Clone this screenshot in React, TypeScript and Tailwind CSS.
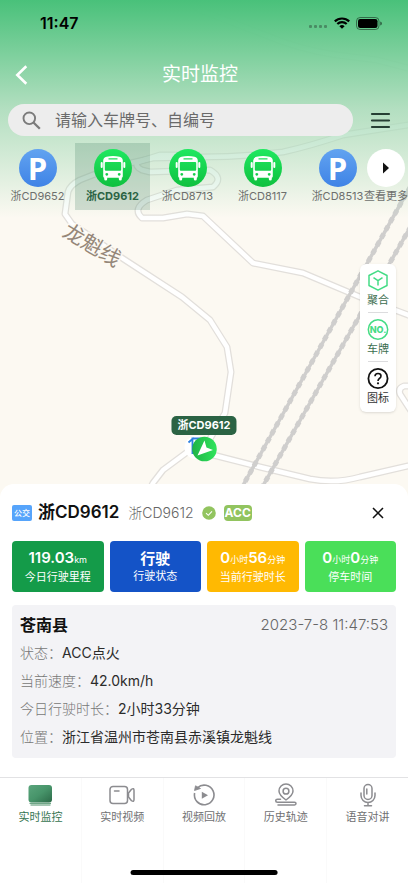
import { useState, type ReactNode } from 'react'

const sans = "font-['Inter','Noto_Sans_CJK_SC',sans-serif]"

const vehicles = [
  { plate: '浙CD9652', parked: true },
  { plate: '浙CD9612', parked: false },
  { plate: '浙CD8713', parked: false },
  { plate: '浙CD8117', parked: false },
  { plate: '浙CD8513', parked: true },
]

const details = [
  { label: '状态：', value: 'ACC点火' },
  { label: '当前速度：', value: '42.0km/h' },
  { label: '今日行驶时长：', value: '2小时33分钟' },
  { label: '位置：', value: '浙江省温州市苍南县赤溪镇龙魁线' },
]

const roads = [
  'M190 0 L200 10 L260 33 Q300 50 337 55 L377 60 L408 68 L440 76',
  'M440 117 L408 125 L343 135 Q310 146 283 152 Q240 157 200 157 L153 158 L113 167 L80 180 Q70 185 68 192 L65 214 L72 224 L122 258 L182 297 L210 320 L227 347 L231 372 L225 413 L204 449',
  'M200 155 L160 155 L138 162 Q134 166 142 170 L150 172 L180 171 L210 170 Q224 178 213 187 L177 190 L147 200 Q132 209 142 218 L163 218 L187 214 L203 216 L253 263 L303 273 L360 297 L408 315 L440 326',
  'M140 510 L153 483 L163 470 L190 450 L217 456 L260 467 L310 479 Q335 484 360 477 L408 466 L440 460',
  'M440 386 L404 386 Q398 388 400 394 L411 411 L430 430',
]

const rails = ['M415 179 L401 203 L346 301 L236 498', 'M420 211 L407 233 L340 350 L256 498']

function MapCanvas() {
  return (
    <svg className="absolute inset-0 h-full w-full" viewBox="0 0 408 496" preserveAspectRatio="xMidYMin slice" aria-hidden="true">
      <g fill="none" strokeLinejoin="round">
        <g stroke="#e2dfdb" strokeWidth="7">
          {roads.map(d => <path key={d} d={d} />)}
        </g>
        <g stroke="#ffffff" strokeWidth="4.500">
          {roads.map(d => <path key={d} d={d} />)}
        </g>
        {rails.map(d => (
          <g key={d} stroke="#cfcecd">
            <path d={d} strokeWidth="3.500" />
            <path d={d} strokeWidth="5" strokeDasharray="5 4" />
          </g>
        ))}
      </g>
      <text
        transform="translate(92 245) rotate(31)"
        textAnchor="middle"
        dominantBaseline="central"
        fontSize="21"
        fill="#958779"
        stroke="#fcf9f2"
        strokeWidth="3"
        paintOrder="stroke"
      >
        龙魁线
      </text>
    </svg>
  )
}

function StatusBar() {
  return (
    <div className="flex h-[46px] items-center justify-between pl-10 pr-[26px]">
      <span className="text-base font-semibold text-black">11:47</span>
      <div className="flex items-center gap-[6px]">
        <svg width="20" height="14" viewBox="0 0 20 14" fill="#1a1a1a" fillOpacity="0.35">
          <rect x="1" y="9" width="3" height="3" rx="1" />
          <rect x="6" y="9" width="3" height="3" rx="1" />
          <rect x="11" y="9" width="3" height="3" rx="1" />
          <rect x="16" y="9" width="3" height="3" rx="1" />
        </svg>
        <svg width="16" height="12" viewBox="0 0 16 12" fill="none" stroke="#000" strokeWidth="2.2">
          <path d="M0.8 4.4 A10.4 10.4 0 0 1 15.2 4.4" />
          <path d="M3.3 7 A6.8 6.8 0 0 1 12.7 7" />
          <path d="M8 11.8 L5.4 9.2 A3.7 3.7 0 0 1 10.6 9.2 Z" fill="#000" stroke="none" />
        </svg>
        <svg width="26" height="13" viewBox="0 0 26 13">
          <rect x="0.5" y="0.5" width="22.5" height="12" rx="3.6" fill="none" stroke="#000" strokeOpacity="0.45" />
          <rect x="2" y="2" width="19.5" height="9" rx="2.2" />
          <path d="M24.2 4.4 Q26 5 26 6.5 Q26 8 24.2 8.6 Z" fillOpacity="0.5" />
        </svg>
      </div>
    </div>
  )
}

function BusIcon() {
  return (
    <svg width="38" height="38" viewBox="0 0 38 38" aria-hidden="true">
      <defs>
        <linearGradient id="bus" x1="0" y1="0" x2="0" y2="1">
          <stop offset="0" stopColor="#1fe860" />
          <stop offset="1" stopColor="#0fc03f" />
        </linearGradient>
      </defs>
      <circle cx="19" cy="19" r="19" fill="url(#bus)" />
      <g fill="#fff">
        <rect x="6.700" y="13" width="2" height="6" rx="1" />
        <rect x="29.300" y="13" width="2" height="6" rx="1" />
        <path
          fillRule="evenodd"
          d="M12.500 7.800 Q19 6.200 25.500 7.800 Q28.500 8.500 28.800 11.500 V27.300 Q28.800 28.500 27.800 28.700 V30 Q27.800 31.600 26.300 31.600 Q24.800 31.600 24.800 30 V28.800 H13.200 V30 Q13.200 31.600 11.700 31.600 Q10.200 31.600 10.200 30 V28.700 Q9.200 28.500 9.200 27.300 V11.500 Q9.500 8.500 12.500 7.800 Z M14.500 9.200 V10.600 H23.500 V9.200 Z M11.800 13 Q10.800 13 10.800 14 V20.800 Q10.800 21.800 11.800 21.800 H26.200 Q27.200 21.800 27.200 20.800 V14 Q27.200 13 26.200 13 Z M12.800 23.900 a1.400 1.400 0 1 0 0.010 0 Z M25.200 23.900 a1.400 1.400 0 1 0 0.010 0 Z"
        />
      </g>
    </svg>
  )
}

function ParkingIcon() {
  return (
    <span className="flex size-[38px] items-center justify-center rounded-full bg-linear-to-b from-[#62a3f0] to-[#3f83e6] font-['Open_Sans',sans-serif] text-[31px] leading-[38px] font-bold text-white">
      P
    </span>
  )
}

function ToolButton({ icon, label, className }: { icon: ReactNode; label: string; className: string }) {
  return (
    <button type="button" className={`flex w-full flex-col items-center gap-px pt-[6px] pb-1 text-[11px] leading-4 ${className}`}>
      {icon}
      {label}
    </button>
  )
}

function MapTools() {
  return (
    <div className="absolute top-[264px] right-3 flex w-9 flex-col items-center rounded-md bg-white pb-[2px] shadow-sm">
      <ToolButton
        label="聚合"
        className="text-[#3c6e50]"
        icon={
          <svg width="22" height="21" viewBox="0 0 22 21" fill="none" stroke="#45dc86" strokeWidth="1.5" strokeLinejoin="round">
            <path d="M11 0.800 L20 5.500 V15.500 L11 20.200 L2 15.500 V5.500 Z" />
            <path d="M6.500 7.700 L11 10.700 L15.500 7.700 M11 10.700 V15.500" />
          </svg>
        }
      />
      <hr className="w-5 border-[#dcdcde]" />
      <ToolButton
        label="车牌"
        className="text-[#3c6e50]"
        icon={
          <svg width="22" height="21" viewBox="0 0 22 21">
            <circle cx="11" cy="10.500" r="9.700" fill="none" stroke="#45dc86" strokeWidth="1.500" />
            <text x="11" y="14" textAnchor="middle" fontSize="9" fontWeight="800" fill="#45dc86">NO.</text>
          </svg>
        }
      />
      <hr className="w-5 border-[#dcdcde]" />
      <ToolButton
        label="图标"
        className="text-[#333]"
        icon={
          <svg width="22" height="21" viewBox="0 0 22 21" fill="none" stroke="#111" strokeWidth="1.800">
            <circle cx="11" cy="10.500" r="9.600" />
            <path d="M8 8.300 Q8 5.500 11 5.500 Q14 5.500 14 8 Q14 9.400 12.400 10.500 Q11 11.500 11 13" strokeWidth="1.600" />
            <circle cx="11" cy="15.300" r="1.100" fill="#111" stroke="none" />
          </svg>
        }
      />
    </div>
  )
}

function VehicleMarker() {
  return (
    <div className="absolute top-[416px] left-1/2 flex -translate-x-1/2 flex-col items-center">
      <span className="rounded-[5px] bg-[#2b6344] px-[6px] text-[11px] leading-[19px] font-bold whitespace-nowrap text-white">
        浙CD9612
      </span>
      <svg width="42" height="28" viewBox="0 0 42 28" aria-hidden="true">
        <defs>
          <linearGradient id="marker" x1="0" y1="0" x2="1" y2="0">
            <stop offset="0" stopColor="#1fb347" />
            <stop offset="1" stopColor="#2fe45c" />
          </linearGradient>
        </defs>
        <circle cx="12.500" cy="12.500" r="11.500" fill="#fff" />
        <path d="M5 7.500 L9 4 V19 M8 3.500 H18" fill="none" stroke="#2c7fe0" strokeWidth="1.800" />
        <circle cx="21" cy="14" r="12.300" fill="url(#marker)" />
        <path d="M21 5.500 L23 12.500 L29.500 15 L14 20.500 Z" fill="#fff" />
      </svg>
    </div>
  )
}

function StatCard({ value, label, className }: { value: ReactNode; label: string; className: string }) {
  return (
    <div className={`flex h-[51px] flex-col items-center justify-center rounded-[4px] whitespace-nowrap text-white ${className}`}>
      <span className="text-[15px] leading-[18px] font-semibold">{value}</span>
      <span className="text-[11px] leading-4">{label}</span>
    </div>
  )
}

function Unit({ children }: { children: ReactNode }) {
  return <small className="text-[9px] font-normal">{children}</small>
}

const tabIcons = {
  monitor: (
    <svg width="26" height="24" viewBox="0 0 26 24">
      <defs>
        <linearGradient id="screen" x1="0" y1="0" x2="1" y2="1">
          <stop offset="0" stopColor="#5aa57c" />
          <stop offset="0.500" stopColor="#47946a" />
          <stop offset="1" stopColor="#2c6a48" />
        </linearGradient>
      </defs>
      <rect x="1.500" y="2" width="23.500" height="17.500" rx="3" fill="url(#screen)" />
      <path d="M2.500 20.300 H24 M3.500 22 H23.500" stroke="#4c9069" strokeWidth="1" />
    </svg>
  ),
  video: (
    <svg width="26" height="24" viewBox="0 0 26 24" fill="none" stroke="#8c8c90" strokeWidth="1.500" strokeLinejoin="round">
      <rect x="1" y="3.500" width="17.500" height="17" rx="3" />
      <path d="M5.500 8 H10" strokeLinecap="round" />
      <path d="M19.500 10 L22.500 6.300 Q25 4.500 25 7.500 V16.500 Q25 19.500 22.500 17.700 L19.500 14 Z" />
    </svg>
  ),
  replay: (
    <svg width="26" height="24" viewBox="0 0 26 24" fill="none" stroke="#8c8c90" strokeWidth="1.600">
      <path d="M6.500 4.800 A9.800 9.800 0 1 1 3.600 10" />
      <path d="M3.500 7.500 L4.500 2.800 L9.500 5.500 Z" fill="#8c8c90" strokeWidth="0.800" />
      <path d="M10.800 8.800 L17 12.300 L10.800 15.800 Z" fill="#8c8c90" stroke="none" />
    </svg>
  ),
  track: (
    <svg width="26" height="24" viewBox="0 0 26 24" fill="none" stroke="#8c8c90" strokeWidth="1.500" strokeLinecap="round" strokeLinejoin="round">
      <path d="M13 17 Q6 12 6 8 A7 7 0 0 1 20 8 Q20 12 13 17 Z" />
      <circle cx="13" cy="8.200" r="2.900" />
      <path d="M7.500 16.300 H4.500 Q2.700 16.300 2.700 17.800 Q2.700 19.300 4.500 19.300 H21.500 Q23 19.300 23 20.600 Q23 22 21.500 22 H5" />
    </svg>
  ),
  voice: (
    <svg width="26" height="24" viewBox="0 0 26 24" fill="none" stroke="#8c8c90" strokeWidth="1.500" strokeLinecap="round">
      <rect x="9" y="1.500" width="8" height="15" rx="4" />
      <path d="M6 10 V12.500 A7 7 0 0 0 20 12.500 V10 M13 19.500 V22.500 M9.500 22.700 H16.500 M11.800 6 V11" />
    </svg>
  ),
}

const tabs = [
  { label: '实时监控', icon: tabIcons.monitor },
  { label: '实时视频', icon: tabIcons.video },
  { label: '视频回放', icon: tabIcons.replay },
  { label: '历史轨迹', icon: tabIcons.track },
  { label: '语音对讲', icon: tabIcons.voice },
]

export default function App() {
  const [selected, setSelected] = useState('浙CD9612')
  const [tab, setTab] = useState('实时监控')
  const [query, setQuery] = useState('')

  return (
    <main className={`flex min-h-screen flex-col bg-white ${sans}`}>
      <section className="relative min-h-[480px] flex-1 overflow-hidden bg-[#fcf9f2]">
        <MapCanvas />

        <div className="relative bg-linear-to-b/srgb from-[#49c17a] via-[#abdcbb]/90 to-[#fcf9f2]/0 pb-2">
          <StatusBar />

          <header className="flex h-[58px] items-center">
            <button type="button" aria-label="返回" className="flex h-10 w-12 items-center pl-[15px]">
              <svg width="13" height="20" viewBox="0 0 13 20" fill="none" stroke="#fff" strokeWidth="2.600">
                <path d="M11.300 1.300 L2.300 10 L11.300 18.700" />
              </svg>
            </button>
            <h1 className="flex-1 text-center text-[19px] leading-6 text-white">实时监控</h1>
            <span className="w-14" />
          </header>

          <div className="flex items-center pr-[17px] pl-2">
            <label className="flex h-[32px] min-w-0 flex-1 items-center gap-[14px] rounded-full bg-[#ededed] pl-[14px]">
              <svg width="19" height="19" viewBox="0 0 19 19" fill="none" stroke="#7b7b7b" strokeWidth="1.900">
                <circle cx="7.300" cy="7.300" r="5.800" />
                <path d="M11.500 11.500 L17.800 17.800" strokeWidth="2.300" />
              </svg>
              <input
                type="search"
                aria-label="搜索车辆"
                value={query}
                onChange={e => setQuery(e.target.value)}
                placeholder="请输入车牌号、自编号"
                className="min-w-0 flex-1 bg-transparent text-base font-normal text-[#333] outline-none placeholder:text-[#6a6a6a]"
              />
            </label>
            <button type="button" aria-label="菜单" className="ml-[17px]">
              <svg width="21" height="17" viewBox="0 0 21 17" stroke="#263f34" strokeWidth="2.200" strokeLinecap="round">
                <path d="M2 2 H19 M2 8.500 H19 M2 15 H19" />
              </svg>
            </button>
          </div>

          <div className="relative mt-[7px]">
            <div className="flex overflow-hidden">
              {vehicles.map(v => (
                <button
                  key={v.plate}
                  type="button"
                  onClick={() => setSelected(v.plate)}
                  className={`flex w-[75px] shrink-0 flex-col items-center gap-px pt-[6px] pb-[5px] text-[11px] leading-[17px] ${
                    v.plate === selected ? 'bg-[#2b704e]/20 font-bold text-[#2b6344]' : 'text-[#6d6f6d]'
                  }`}
                >
                  {v.parked ? <ParkingIcon /> : <BusIcon />}
                  {v.plate}
                </button>
              ))}
            </div>
            <button
              type="button"
              className="absolute top-0 right-0 flex flex-col items-center gap-px pt-[6px] text-[11px] leading-[17px] text-[#6d6f6d]"
            >
              <span className="flex size-[38px] items-center justify-center rounded-full bg-white">
                <svg width="8" height="12" viewBox="0 0 8 12">
                  <path d="M1 0.500 L7 6 L1 11.500 Z" fill="#111" />
                </svg>
              </span>
              查看更多
            </button>
          </div>
        </div>

        <VehicleMarker />
        <MapTools />
      </section>

      <section className="relative -mt-3 rounded-t-[14px] bg-white px-3 pt-4 pb-[19px]">
        <div className="flex h-[26px] items-center">
          <span className="rounded-[2px] bg-[#56a4fb] px-[2px] text-[8px] leading-4 font-medium text-white">公交</span>
          <h2 className="ml-[6px] text-[17px] font-semibold text-[#111]">浙CD9612</h2>
          <span className="ml-[9px] text-sm font-light text-[#666]">浙CD9612</span>
          <svg className="ml-2" width="14" height="14" viewBox="0 0 14 14">
            <circle cx="7" cy="7" r="6.800" fill="#92c45f" />
            <path d="M4 7.200 L6.300 9.300 L10 5.300" fill="none" stroke="#fff" strokeWidth="1.100" />
          </svg>
          <span className="ml-2 rounded-[4px] bg-[#92c45f] px-px text-[12px] leading-4 font-bold text-white">ACC</span>
          <button type="button" aria-label="关闭" className="mr-3 ml-auto">
            <svg width="12" height="12" viewBox="0 0 12 12" stroke="#111" strokeWidth="1.500">
              <path d="M1 1 L11 11 M11 1 L1 11" />
            </svg>
          </button>
        </div>

        <div className="mt-[15px] grid grid-cols-4 gap-[6px]">
          <StatCard className="bg-[#149b49]" value={<>119.03<Unit>km</Unit></>} label="今日行驶里程" />
          <StatCard className="bg-[#1453c7]" value="行驶" label="行驶状态" />
          <StatCard className="bg-[#ffb902]" value={<>0<Unit>小时</Unit>56<Unit>分钟</Unit></>} label="当前行驶时长" />
          <StatCard className="bg-[#4adf59]" value={<>0<Unit>小时</Unit>0<Unit>分钟</Unit></>} label="停车时间" />
        </div>

        <div className="mt-[13px] rounded-[4px] bg-[#f3f3f6] px-2 pt-[6px] pb-[7px]">
          <div className="flex h-7 items-center justify-between">
            <h3 className="text-base font-bold text-[#111]">苍南县</h3>
            <time className="text-[15px] font-light text-[#666]">2023-7-8 11:47:53</time>
          </div>
          <dl className="text-sm leading-7">
            {details.map(d => (
              <div key={d.label} className="flex">
                <dt className="font-light text-[#777]">{d.label}</dt>
                <dd className="text-[#2b2b2b]">{d.value}</dd>
              </div>
            ))}
          </dl>
        </div>
      </section>

      <nav className="relative flex h-[106px] border-t border-[#e2e2e4] bg-white">
        {tabs.map(t => (
          <button
            key={t.label}
            type="button"
            onClick={() => setTab(t.label)}
            className={`flex flex-1 flex-col items-center border-l border-[#fafafa] pt-[5px] text-[11px] leading-5 first:border-l-0 ${
              t.label === tab ? 'text-[#357350]' : 'text-[#707072]'
            }`}
          >
            {t.icon}
            {t.label}
          </button>
        ))}
        <span className="absolute bottom-2 left-1/2 h-[5px] w-[36%] -translate-x-1/2 rounded-full bg-black" />
      </nav>
    </main>
  )
}
